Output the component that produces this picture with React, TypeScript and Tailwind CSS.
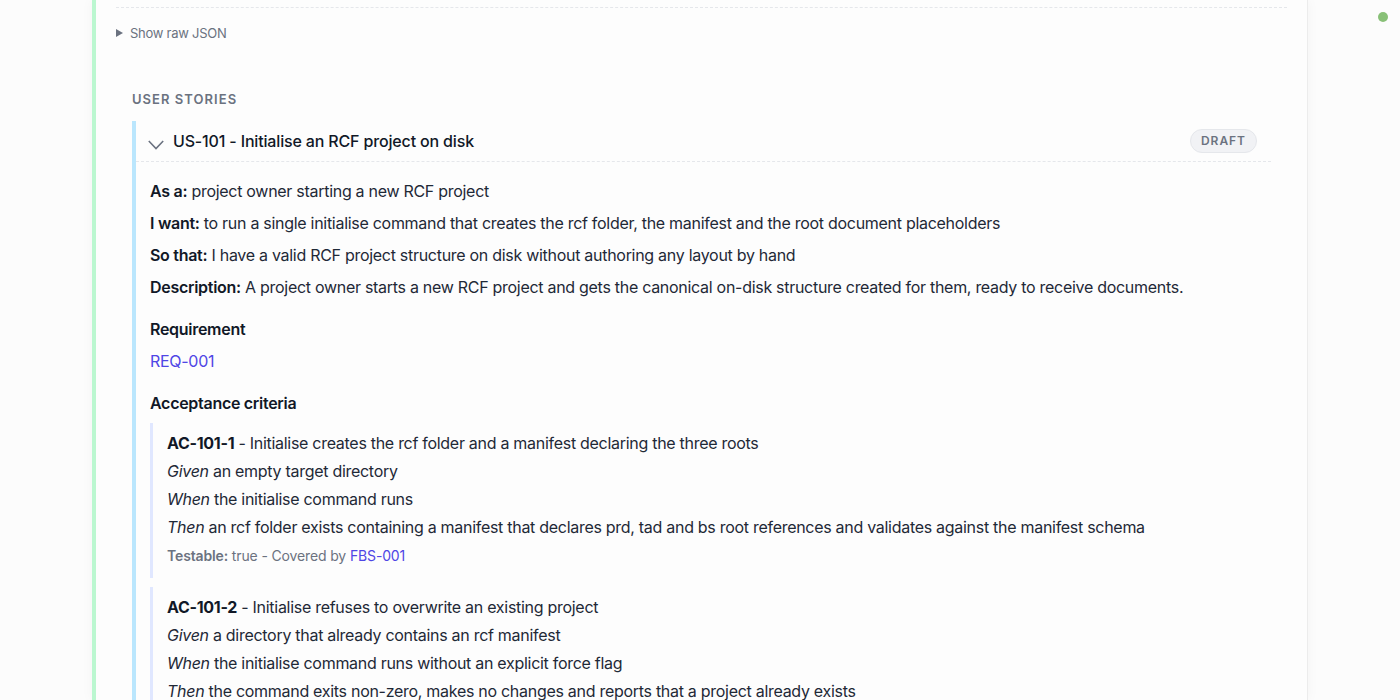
import React from "react";

const Line = ({ label, children }: { label: string; children: React.ReactNode }) => (
  <p className="text-[16px] leading-6 text-[#1f2937]">
    <span className="font-semibold text-[#111827]">{label}</span> {children}
  </p>
);

const AC = ({
  id,
  title,
  given,
  when,
  then,
  fbs,
}: {
  id: string;
  title: string;
  given: string;
  when: string;
  then: string;
  fbs?: string;
}) => (
  <div className="border-l-[3px] border-[#e0e7ff] pl-[14px] pt-2 pb-3 flex flex-col gap-1 text-[16px] leading-6 text-[#1f2937]">
    <p>
      <span className="font-bold text-[#111827]">{id}</span> - {title}
    </p>
    <p>
      <em>Given</em> {given}
    </p>
    <p>
      <em>When</em> {when}
    </p>
    <p>
      <em>Then</em> {then}
    </p>
    {fbs && (
      <p className="mt-[3px] text-[14px] leading-5 tracking-[-0.01em] text-[#6b7280]">
        <span className="font-semibold">Testable:</span> true - Covered by{" "}
        <span className="text-[#4f46e5]">{fbs}</span>
      </p>
    )}
  </div>
);

export default function App() {
  return (
    <div
      className="min-h-[700px] h-[700px] overflow-hidden bg-[#fcfcfc] relative tracking-[-0.018em]"
      style={{ fontFamily: "Inter, 'Noto Sans', sans-serif" }}
    >
      <div className="absolute left-[1378px] top-[12px] w-[10px] h-[10px] rounded-full bg-[#88c077]" />
      <div className="ml-[92px] w-[1216px] h-[700px] bg-[#fdfdfd] border-l-4 border-l-[#bbf7d0] border-r border-r-[#ececec] shadow-[0_0_12px_rgba(0,0,0,0.04)] px-5">
        <div className="h-[8px] border-b border-dashed border-[#e5e7eb]" />
        <div className="mt-[15px] flex items-center gap-[7px] text-[13px] leading-5 tracking-[-0.02em] text-[#6b7280]">
          <svg width="7" height="8" viewBox="0 0 7 8">
            <polygon points="0,0 7,4 0,8" fill="#6b7280" />
          </svg>
          <span>Show raw JSON</span>
        </div>
        <div className="pl-4 pr-4 mt-[46px]">
          <div className="text-[13px] leading-5 font-semibold tracking-[0.08em] text-[#6b7280]">USER STORIES</div>
          <div className="mt-[12px] border-l-4 border-[#bae6fd]">
            <div className="flex items-center py-2 pl-3 pr-[14px] border-b border-dashed border-[#e5e7eb]">
              <svg width="16" height="10" viewBox="0 0 16 10" className="mt-[8px]">
                <polyline points="0.8,1 8,8.5 15.2,1" fill="none" stroke="#6b7280" strokeWidth="1.6" />
              </svg>
              <span className="ml-[9px] text-[16px] leading-6 font-medium tracking-[-0.01em] text-[#111827]">
                US-101 - Initialise an RCF project on disk
              </span>
              <span className="ml-auto h-[24px] px-[10px] rounded-full bg-[#f1f2f5] border border-[#e5e7eb] text-[12px] font-semibold tracking-[0.08em] text-[#6b7280] flex items-center">
                DRAFT
              </span>
            </div>
            <div className="pl-[14px] pr-4 pt-[17px]">
              <div className="flex flex-col gap-2">
                <Line label="As a:">project owner starting a new RCF project</Line>
                <Line label="I want:">
                  to run a single initialise command that creates the rcf folder, the manifest and the root document placeholders
                </Line>
                <Line label="So that:">I have a valid RCF project structure on disk without authoring any layout by hand</Line>
                <Line label="Description:">
                  A project owner starts a new RCF project and gets the canonical on-disk structure created for them, ready to receive documents.
                </Line>
              </div>
              <div className="mt-[18px] text-[16px] leading-6 font-semibold text-[#111827]">Requirement</div>
              <div className="mt-2 text-[16px] leading-6 text-[#4f46e5]">REQ-001</div>
              <div className="mt-[18px] text-[16px] leading-6 font-semibold text-[#111827]">Acceptance criteria</div>
              <div className="mt-2 flex flex-col gap-[9px]">
                <AC
                  id="AC-101-1"
                  title="Initialise creates the rcf folder and a manifest declaring the three roots"
                  given="an empty target directory"
                  when="the initialise command runs"
                  then="an rcf folder exists containing a manifest that declares prd, tad and bs root references and validates against the manifest schema"
                  fbs="FBS-001"
                />
                <AC
                  id="AC-101-2"
                  title="Initialise refuses to overwrite an existing project"
                  given="a directory that already contains an rcf manifest"
                  when="the initialise command runs without an explicit force flag"
                  then="the command exits non-zero, makes no changes and reports that a project already exists"
                  fbs="FBS-001"
                />
              </div>
            </div>
          </div>
        </div>
      </div>
    </div>
  );
}
